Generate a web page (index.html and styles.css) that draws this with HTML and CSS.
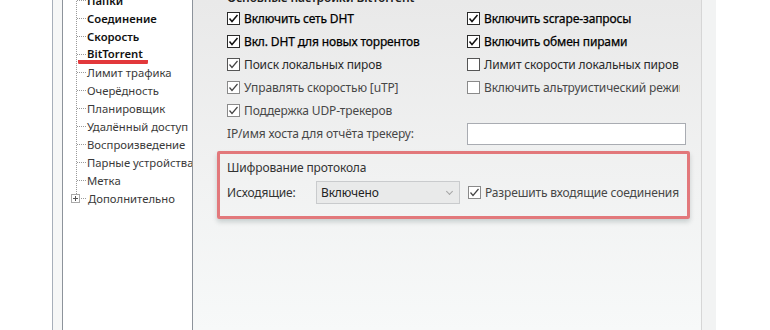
FILE: index.html
```html
<!DOCTYPE html>
<html lang="ru">
<head>
  <title>Настройки - BitTorrent</title>
  <meta charset="utf-8" />
  <link rel="stylesheet" href="styles.css">
</head>
<body>

  <div class="window">
    <div class="edge"></div>

    <div class="frame">

      <!-- дерево разделов -->
      <div class="tree">
        <ul class="tree-list">
          <li class="bold">Папки</li>
          <li class="bold">Соединение</li>
          <li class="bold">Скорость</li>
          <li class="bold current"><span class="mark">BitTorrent</span></li>
          <li>Лимит трафика</li>
          <li>Очерёдность</li>
          <li>Планировщик</li>
          <li>Удалённый доступ</li>
          <li>Воспроизведение</li>
          <li>Парные устройства</li>
          <li>Метка</li>
          <li class="last"><span class="expander"></span>Дополнительно</li>
        </ul>
      </div>

      <!-- страница настроек -->
      <div class="page">
        <div class="section-title">Основные настройки BitTorrent</div>

        <div class="options">
          <label class="opt strong"><span class="box on"></span>Включить сеть DHT</label>
          <label class="opt strong"><span class="box on"></span>Включить scrape-запросы</label>

          <label class="opt strong"><span class="box on"></span>Вкл. DHT для новых торрентов</label>
          <label class="opt strong"><span class="box on"></span>Включить обмен пирами</label>

          <label class="opt mid"><span class="box on"></span>Поиск локальных пиров</label>
          <label class="opt mid"><span class="box"></span>Лимит скорости локальных пиров</label>

          <label class="opt light"><span class="box on"></span>Управлять скоростью [uTP]</label>
          <label class="opt light"><span class="box"></span>Включить альтруистический режим</label>

          <label class="opt light"><span class="box on"></span>Поддержка UDP-трекеров</label>
          <div></div>

          <div class="opt light">IP/имя хоста для отчёта трекеру:</div>
          <div class="field"><span class="text-input"></span></div>
        </div>

        <div class="encryption">
          <div class="group-title">Шифрование протокола</div>
          <div class="enc-row">
            <span class="enc-label">Исходящие:</span>
            <span class="select">Включено<span class="chevron"></span></span>
            <label class="opt light"><span class="box on"></span>Разрешить входящие соединения</label>
          </div>
        </div>
      </div>

      <div class="outside"></div>
    </div>
  </div>

</body>
</html>
```

FILE: styles.css
```css
body {
  margin: 0;
  width: 770px;
  height: 330px;
  overflow: hidden;
  background: #fff;
  font-family: "Noto Sans", "Open Sans", sans-serif;
  font-size: 12px;
  color: #222;
}

.window {
  display: flex;
  height: 330px;
}

.edge {
  width: 52px;
  background: #fff;
}

.frame {
  flex: 1;
  display: flex;
  border-left: 1px solid #a7afba;
  background: #f6f7f7;
  padding-left: 9px;
}

/* tree */

.tree {
  width: 129px;
  background: #fff;
  border-left: 1px solid #8d939b;
  border-right: 1px solid #8d939b;
  overflow: hidden;
}

.tree-list {
  list-style: none;
  margin: -9px 0 0 0;
  padding: 0 0 0 13px;
  font-size: 11.3px;
}

.tree-list li {
  display: flex;
  align-items: center;
  height: 18px;
  padding-left: 11px;
  white-space: nowrap;
  color: #3a3a3a;
  background:
    repeating-linear-gradient(to bottom, #9a9a9a 0 1px, transparent 1px 2px) no-repeat 0 0 / 1px 100%,
    repeating-linear-gradient(to right, #9a9a9a 0 1px, transparent 1px 2px) no-repeat 1px 9px / 9px 1px;
}

.tree-list li.last {
  background:
    repeating-linear-gradient(to bottom, #9a9a9a 0 1px, transparent 1px 2px) no-repeat 0 0 / 1px 9px,
    repeating-linear-gradient(to right, #9a9a9a 0 1px, transparent 1px 2px) no-repeat 1px 9px / 9px 1px;
}

.tree-list li.bold {
  font-weight: 600;
  color: #111;
}

.tree-list li.current {
  align-items: flex-start;
}

/* red hand-drawn stroke under the current section */
.mark {
  display: block;
  height: 20px;
  line-height: 18px;
  margin-left: -9px;
  padding: 0 5px 0 9px;
  background: linear-gradient(#e2383b, #e2383b) no-repeat 0 15px / 100% 4px;
  border-radius: 3px;
}

.expander {
  width: 7px;
  height: 7px;
  margin-left: -16px;
  margin-right: 8px;
  border: 1px solid #a9a9a9;
  background:
    linear-gradient(#555, #555) no-repeat center / 5px 1px,
    linear-gradient(#555, #555) no-repeat center / 1px 5px,
    #fff;
}

/* settings page */

.page {
  width: 475px;
  padding-left: 34px;
  letter-spacing: -0.15px;
  background:
    linear-gradient(#d6d6d6, #d6d6d6) no-repeat right 0 top 0 / 1px 100%,
    linear-gradient(to bottom, #e9e9e9, #f1f2f2 55%, #f7f9f9);
  border-right: 14px solid #f2f3f3;
  box-shadow: 1px 0 0 #7aa7dc, 2px 0 0 #c3d8f0;
  overflow: hidden;
}

.section-title {
  height: 18px;
  line-height: 18px;
  margin-top: -11px;
  font-weight: 600;
  color: #222;
}

.options {
  display: grid;
  grid-template-columns: 240px 213px;
  grid-auto-rows: 23px;
}

.opt {
  display: flex;
  align-items: center;
  white-space: nowrap;
  overflow: hidden;
}

.field {
  display: flex;
  align-items: center;
}

.opt.strong {
  color: #000;
  -webkit-text-stroke: 0.25px #000;
}

.opt.mid {
  color: #2a2a2a;
}

.opt.light {
  color: #474747;
}

.box {
  flex: none;
  width: 11px;
  height: 11px;
  margin-right: 4px;
  border: 1px solid #8a8a8a;
  background: #fff;
}

.strong .box {
  border-color: #2a2a2a;
}

.mid .box {
  border-color: #555;
}

.box.on {
  background:
    url("data:image/svg+xml,%3Csvg xmlns='http://www.w3.org/2000/svg' width='11' height='11'%3E%3Cpolyline points='1.5,5.5 4,8.5 9.5,2' fill='none' stroke='%23444' stroke-width='1.2'/%3E%3C/svg%3E") no-repeat center,
    #fff;
}

.strong .box.on {
  background:
    url("data:image/svg+xml,%3Csvg xmlns='http://www.w3.org/2000/svg' width='11' height='11'%3E%3Cpolyline points='1.5,5.5 4,8.5 9.5,2' fill='none' stroke='%23111' stroke-width='1.5'/%3E%3C/svg%3E") no-repeat center,
    #fff;
}

.text-input {
  flex: none;
  width: 217px;
  height: 20px;
  margin-top: 1px;
  border: 1px solid #a9acb2;
  background: #fff;
}

/* encryption group, circled in red */

.encryption {
  width: 460px;
  margin: 6px 0 0 -10px;
  padding: 5px 0 12px 7px;
  border: 3px solid rgba(222, 86, 90, 0.78);
  border-radius: 2px;
  box-shadow: 0 3px 5px rgba(0, 40, 40, 0.18);
}

.group-title {
  height: 18px;
  line-height: 18px;
  color: #333;
}

.enc-row {
  display: flex;
  align-items: center;
  height: 23px;
  margin-top: 4px;
}

.enc-label {
  width: 89px;
  color: #333;
}

.select {
  display: flex;
  align-items: center;
  justify-content: space-between;
  box-sizing: content-box;
  width: 131px;
  height: 21px;
  margin-right: 8px;
  padding: 0 7px 0 4px;
  border: 1px solid #c9cbcd;
  background: #e9eaea;
  color: #222;
}

.chevron {
  width: 4px;
  height: 4px;
  margin-top: -3px;
  border-right: 1px solid #a5a5a5;
  border-bottom: 1px solid #a5a5a5;
  transform: rotate(45deg);
}

.outside {
  flex: 1;
  background: #fff;
}
```
